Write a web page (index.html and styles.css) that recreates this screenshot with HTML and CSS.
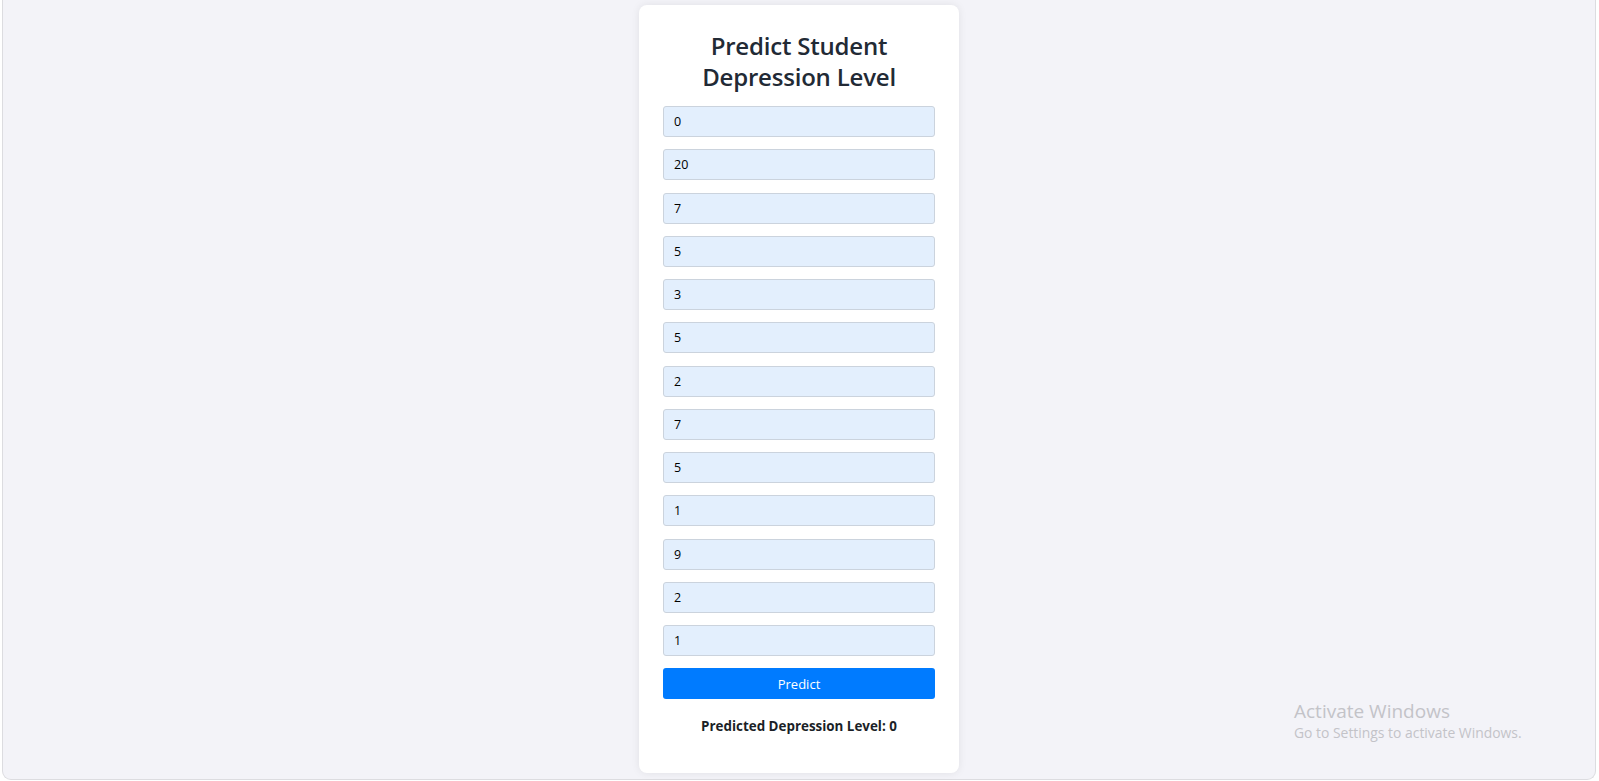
FILE: index.html
```html
<!DOCTYPE html>
<html lang="en">
<head>
<meta charset="utf-8">
<title>Predict Student Depression Level</title>
<link rel="stylesheet" href="styles.css">
</head>
<body>
<div class="frame">
  <div class="card">
    <h2 class="title">Predict Student Depression Level</h2>
    <form class="form">
      <input class="field" type="text" value="0">
      <input class="field" type="text" value="20">
      <input class="field" type="text" value="7">
      <input class="field" type="text" value="5">
      <input class="field" type="text" value="3">
      <input class="field" type="text" value="5">
      <input class="field" type="text" value="2">
      <input class="field" type="text" value="7">
      <input class="field" type="text" value="5">
      <input class="field" type="text" value="1">
      <input class="field" type="text" value="9">
      <input class="field" type="text" value="2">
      <input class="field" type="text" value="1">
      <button class="btn" type="button">Predict</button>
    </form>
    <p class="result">Predicted Depression Level: 0</p>
  </div>
  <div class="watermark">
    <div class="wm-title">Activate Windows</div>
    <div class="wm-sub">Go to Settings to activate Windows.</div>
  </div>
</div>
</body>
</html>
```

FILE: styles.css
```css
html, body {
  margin: 0;
  padding: 0;
  background: #ffffff;
  height: 100%;
}
body {
  font-family: "Open Sans", "Noto Sans", sans-serif;
}
.frame {
  position: relative;
  box-sizing: border-box;
  margin: 0 3px 0 2px;
  height: 780px;
  background: #f3f3f8;
  border: 1px solid #dcdce0;
  border-top: none;
  border-radius: 0 0 9px 9px;
  display: flex;
  justify-content: center;
  padding-top: 5px;
}
.card {
  box-sizing: border-box;
  width: 320px;
  height: 768px;
  background: #ffffff;
  border-radius: 8px;
  box-shadow: 0 0 8px rgba(0, 0, 0, 0.08);
  padding: 24px 24px 24px;
}
.title {
  margin: 0 0 15px;
  font-size: 24px;
  line-height: 31px;
  font-weight: 600;
  color: #222a35;
  text-align: center;
  letter-spacing: -0.2px;
  padding-top: 1px;
}
.form {
  display: flex;
  flex-direction: column;
  gap: 12.25px;
  margin-top: -1px;
}
.field {
  box-sizing: border-box;
  height: 31px;
  width: 100%;
  margin: 0;
  padding: 0 10px;
  background: #e3effd;
  border: 1px solid #cbd3dd;
  border-radius: 3px;
  font-family: "Open Sans", "Noto Sans", sans-serif;
  font-size: 12.5px;
  color: #000;
  outline: none;
}
.btn {
  margin-top: -0.25px;
  height: 31px;
  width: 100%;
  border: none;
  border-radius: 3px;
  background: #007bff;
  color: #ffffff;
  font-family: "Open Sans", "Noto Sans", sans-serif;
  font-size: 13px;
  padding: 0;
}
.result {
  margin: 17px 0 0;
  text-align: center;
  font-size: 13.4px;
  line-height: 20px;
  font-weight: 700;
  color: #1b1f27;
}
.watermark {
  position: absolute;
  left: 1291px;
  top: 699px;
  color: #c3c3c8;
}
.wm-title {
  font-size: 19px;
  line-height: 24px;
}
.wm-sub {
  font-size: 13.9px;
  line-height: 19px;
}
```
